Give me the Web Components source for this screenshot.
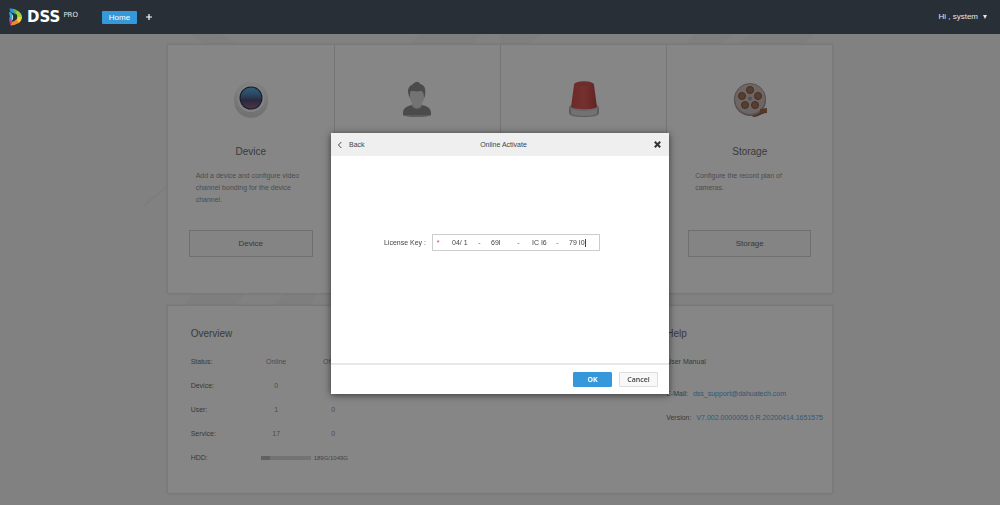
<!DOCTYPE html>
<html lang="en">
<head>
<meta charset="utf-8">
<meta name="viewport" content="width=device-width, initial-scale=1">
<title>DSS PRO</title>
<style>
  html { height: 100%; }
  body {
    margin: 0; min-height: 100%;
    font: 7px/12px "Liberation Sans", Arial, sans-serif;
    color: #666; background: #f4f4f4;
  }
</style>
</head>
<body>
<dss-app></dss-app>

<template id="topbar">
  <style>
    :host { display: flex; align-items: center; height: 34px; padding: 0 13px 0 8px; box-sizing: border-box;
      position: relative; z-index: 3; background: #282f36; color: #e3e6e8; font-size: 8px; }
    .brand { display: flex; align-items: center; color: #fff; text-decoration: none; width: 94px; }
    .brand svg { width: 15px; height: 18px; margin-right: 4px; }
    b { font: bold 15px/18px "DejaVu Sans", Verdana, sans-serif; }
    small { font: 7px/10px "DejaVu Sans", Verdana, sans-serif; margin: 0 0 4px 3px; color: #e3e6e8; }
    nav { display: flex; align-items: center; flex: 1; gap: 8px; }
    .tab { background: #3498db; color: #fff; text-decoration: none; border-radius: 1px; width: 35px; line-height: 13px; text-align: center; }
    button { font: inherit; color: inherit; background: none; border: 0; padding: 0; display: flex; align-items: center; gap: 5px; }
    .add svg { width: 8px; height: 8px; }
    .user svg { width: 4px; height: 4px; }
  </style>
  <a class="brand" href="#">
    <svg viewBox="0 0 30 36" aria-hidden="true">
      <path d="M3 1C9 1 14 2 18 5L15 13C12 10 8 9 5 9Z" fill="#2f8fe0"/>
      <path d="M9 2C20 3 28 10 28 19L19 20C19 14 17 10 12 8Z" fill="#63bb3a"/>
      <path d="M18 6c6 3 10 7 10 13l-9 1c0-5-1-8-4-10z" fill="#9bd03e"/>
      <path d="M28 18c0 5-3 10-8 13l-6-6c3-1 5-4 5-7z" fill="#f4cf37"/>
      <path d="M22 29C17 33 11 35 5 35l3-8c4 0 6-1 9-4z" fill="#f08a2c"/>
      <path d="M2 18l4 2 2 8-3 7c-2-5-3-11-3-17z" fill="#b8389b"/>
      <path d="M2 8c4 1 8 4 8 10 0 4-1 7-4 9-1-7-3-12-4-19z" fill="#2fb3d2"/>
      <path d="M8 13c3 3 3 8 0 12 1-4 1-8 0-12z" fill="#e9f4f6"/>
    </svg>
    <b>DSS</b><small>PRO</small>
  </a>
  <nav>
    <a class="tab" href="#">Home</a>
    <button class="add" type="button" aria-label="Add tab"><svg viewBox="0 0 8 8"><path d="M4 1v6M1 4h6" stroke="#fff" stroke-width="1.2"/></svg></button>
  </nav>
  <button class="user" type="button">Hi , system <svg viewBox="0 0 4 4"><path d="M0 0h4L2 4z" fill="#e3e6e8"/></svg></button>
</template>

<template id="card">
  <style>
    :host { display: flex; flex-direction: column; padding: 36px 21px; background: #fff; }
    :host(:not(:first-child)) { border-left: 1px solid #dcdcdc; }
    .icon { height: 36px; display: flex; justify-content: center; }
    ::slotted(svg) { width: 40px; height: 40px; flex: none; }
    h2 { margin: 25px 0 8px; height: 20px; font: 10px/20px "Liberation Sans", Arial, sans-serif; text-align: center; color: #666; }
    p { margin: 0 7px 24px; min-height: 36px; color: #8c8c8c; }
    button { height: 27px; font: 8px "Liberation Sans", Arial, sans-serif; color: #666; background: #fafafa; border: 1px solid #d0d0d0; }
  </style>
  <div class="icon"><slot></slot></div>
</template>

<template id="overview">
  <style>
    :host { display: block; padding: 21px 23px 23px; }
    h2 { margin: 0 0 9px; font: 10px/14px "Liberation Sans", Arial, sans-serif; }
    table { border-collapse: collapse; table-layout: fixed; width: 171px; color: #8c8c8c; }
    th, td { padding: 0; height: 24px; width: 57px; font-weight: normal; text-align: center; }
    th:first-child { text-align: left; color: #666; }
    .disk { display: flex; align-items: center; gap: 3px; padding-left: 13px; font-size: 6px; color: #777; }
    .bar { width: 50px; height: 4px; background: #d8d8d8; }
    .bar i { display: block; width: 18%; height: 4px; background: #b4b4b4; }
  </style>
  <h2>Overview</h2>
  <table>
    <tr><th scope="row">Status:</th><td>Online</td><td>Offline</td></tr>
    <tr><th scope="row">Device:</th><td>0</td><td></td></tr>
    <tr><th scope="row">User:</th><td>1</td><td>0</td></tr>
    <tr><th scope="row">Service:</th><td>17</td><td>0</td></tr>
    <tr><th scope="row">HDD:</th><td colspan="2"><div class="disk"><div class="bar"><i></i></div>189G/1049G</div></td></tr>
  </table>
</template>

<template id="help">
  <style>
    :host { display: block; padding: 21px 0; line-height: 24px; white-space: nowrap; }
    h2 { margin: 0 0 9px; font: 10px/14px "Liberation Sans", Arial, sans-serif; }
    p { margin: 0; display: flex; gap: 5px; }
    .manual { margin-bottom: 8px; }
    .manual a { color: inherit; }
    a { color: #5aa2dc; text-decoration: none; }
  </style>
  <h2>Help</h2>
  <p class="manual"><a href="#">User Manual</a></p>
  <p>E-Mail: <a href="mailto:dss_support@dahuatech.com">dss_support@dahuatech.com</a></p>
  <p>Version: <a href="#">V7.002.0000005.0.R.20200414.1651575</a></p>
</template>

<template id="license">
  <style>
    :host { display: grid; grid-template-columns: 10px 1fr 5px 1fr 5px 1fr 5px 1fr 5px; align-items: center;
      height: 17px; box-sizing: border-box; border: 1px solid #ccc; background: #fff; color: #555; }
    .req { color: #e33; text-align: center; }
    input { width: 100%; min-width: 0; box-sizing: border-box; border: 0; padding: 0 0 0 9px; margin: 0; background: none; outline: 0;
      font: 7px/12px "Liberation Sans", Arial, sans-serif; color: #444; height: 12px; }
    .last { display: flex; align-items: center; position: relative; }
    .last::after { content: ""; position: absolute; left: 25px; width: 1px; height: 8px; background: #444; }
    .dash { text-align: center; }
  </style>
  <span class="req">*</span>
  <input id="key" aria-label="License Key part 1" value="04/ 1"><span class="dash">-</span>
  <input aria-label="License Key part 2" value="69l"><span class="dash">-</span>
  <input aria-label="License Key part 3" value=" IC I6"><span class="dash">-</span>
  <span class="last"><input aria-label="License Key part 4" value="79 I0"></span>
</template>

<template id="dialog">
  <style>
    :host { display: flex; justify-content: center; align-items: flex-start; position: fixed; inset: 34px 0 0; z-index: 2;
      padding-top: 99px; background: rgba(14,14,14,.5); box-sizing: border-box; overflow: auto; }
    section { width: 338px; max-width: 100%; background: #fff; box-shadow: 0 1px 7px rgba(0,0,0,.6); color: #444; }
    header { display: grid; grid-template-columns: 1fr auto 1fr; align-items: center; height: 23px; padding: 0 7px 0 6px; background: #efefef; }
    h1 { margin: 0; padding-left: 8px; font: 7px/12px "Liberation Sans", Arial, sans-serif; }
    header button { font: inherit; color: inherit; background: none; border: 0; padding: 0; display: flex; align-items: center; gap: 6px; justify-self: start; }
    header .close { justify-self: end; }
    header svg { width: 6px; height: 8px; }
    header .close svg { width: 9px; height: 9px; }
    .body { display: grid; grid-template-columns: 1fr 168px; column-gap: 6px; align-items: center; padding: 78px 69px 112px 24px; }
    label { text-align: right; }
    footer { display: flex; justify-content: flex-end; gap: 7px; padding: 7px 11px; border-top: 2px solid #e8e8e8; }
    footer button { width: 39px; height: 15px; padding: 0; font: 600 7px/12px "Open Sans", "Noto Sans", sans-serif; border-radius: 1px;
      border: 1px solid #ddd; background: #f8f8f8; color: #444; }
    footer .ok { background: #3498db; border-color: #3498db; color: #fff; font-weight: 700; }
  </style>
  <section role="dialog" aria-labelledby="title">
    <header>
      <button type="button"><svg viewBox="0 0 6 8"><path d="M4.4 1L1.4 4l3 3" fill="none" stroke="#444" stroke-width="1"/></svg><span>Back</span></button>
      <h1 id="title">Online Activate</h1>
      <button class="close" type="button" aria-label="Close"><svg viewBox="0 0 9 9"><path d="M1.8 1.8l5.400 5.400M7.200 1.800L1.800 7.200" stroke="#333" stroke-width="2"/></svg></button>
    </header>
    <div class="body"><label for="license-field">License Key :</label><dss-license id="license-field"></dss-license></div>
    <footer><button class="ok" type="button">OK</button><button type="button">Cancel</button></footer>
  </section>
</template>

<template id="app">
  <style>
    :host { display: block; }
    main { display: grid; grid-template-columns: minmax(0,1fr) minmax(0,4fr) minmax(0,1fr); padding: 10px 0 12px;
      min-height: calc(100vh - 34px); box-sizing: border-box; align-content: start; row-gap: 11px; position: relative; }
    .backdrop { position: absolute; inset: 0; width: 100%; height: 100%; }
    .cards, .info { grid-column: 2; display: grid; position: relative; background: #fff; border: 1px solid #e4e4e4; box-shadow: 0 0 2px rgba(0,0,0,.1); }
    .cards { grid-template-columns: repeat(4, minmax(0,1fr)); }
    .info { grid-template-columns: minmax(0,3fr) minmax(0,1fr); }
  </style>
  <dss-topbar></dss-topbar>
  <main>
    <svg class="backdrop" viewBox="0 0 1000 471" preserveAspectRatio="none" aria-hidden="true">
      <g fill="#eeeeee"><path d="M190 0h32l14 10h-32zM420 0h62l-9 10h-62zM500 0h42l-14 10h-28zM695 0h36l-9 10h-36zM750 0h64l-10 10h-64z"/>
      <path d="M192 260h52l-8 11h-52zM284 260h32l-5 11h-38z"/></g>
      <path d="M144 171l22-18" stroke="#ececec" stroke-width="2"/>
    </svg>
    <div class="cards">
      <dss-card heading="Device" text="Add a device and configure video channel bonding for the device channel.">
        <svg viewBox="0 0 40 40">
          <defs><linearGradient id="lens" x2="0" y2="1"><stop stop-color="#5aa9e0"/><stop offset=".35" stop-color="#4681b4"/><stop offset=".6" stop-color="#46436f"/><stop offset="1" stop-color="#8b5a80"/></linearGradient>
          <linearGradient id="rim" x2="0" y2="1"><stop stop-color="#f6f6f6"/><stop offset="1" stop-color="#d5d5d5"/></linearGradient></defs>
          <circle cx="20" cy="20" r="17" fill="#bdbdbd" opacity=".6"/>
          <circle cx="20" cy="18" r="17" fill="url(#rim)"/><circle cx="20" cy="17.5" r="13.5" fill="#f8f8f8"/>
          <circle cx="20" cy="17" r="11.5" fill="#20243d"/><circle cx="20" cy="17" r="10.5" fill="url(#lens)"/>
        </svg>
      </dss-card>
      <dss-card>
        <svg viewBox="0 0 40 40">
          <ellipse cx="20" cy="34" rx="14" ry="2" fill="#aaa"/>
          <path d="M15 20h10v8c0 4-10 4-10 0z" fill="#cfcfcf"/>
          <path d="M6 34v-2c0-5 4-7 9-8 1 5 9 5 10 0 5 1 9 3 9 8v2z" fill="#888"/>
          <path d="M12 10c0 8 3 16 8 16s8-8 8-16l-7-3z" fill="#d9d9d9"/>
          <path d="M12 15C9 7 13 5 16 3c3-3 6-3 7 0 5 1 6 5 5 12l-1 2c0-6-2-7-3-7-4 1-8 0-10 0-1 1-1 3-1 7z" fill="#898989"/>
        </svg>
      </dss-card>
      <dss-card>
        <svg viewBox="0 0 40 40">
          <defs><linearGradient id="lamp"><stop stop-color="#c94643"/><stop offset=".5" stop-color="#dc5450"/><stop offset="1" stop-color="#b83a3a"/></linearGradient></defs>
          <path d="M5 26v6c0 3 7 4 15 4s15-1 15-4v-6z" fill="#aaa"/>
          <path d="M7 26v6c0 2 6 3 13 3s13-1 13-3v-6z" fill="#d7d7d7"/>
          <ellipse cx="20" cy="26" rx="15" ry="4" fill="#c2c2c2"/>
          <path d="M10 4c0-5 20-5 20 0l3 22c-3 3-23 3-26 0z" fill="url(#lamp)"/>
          <ellipse cx="20" cy="3" rx="8" ry="2" fill="#c84c48"/>
        </svg>
      </dss-card>
      <dss-card heading="Storage" text="Configure the record plan of cameras.">
        <svg viewBox="0 0 40 40">
          <path d="M21 33l16-6v5c-5 0-9 4-14 4z" fill="#8f5b3b"/>
          <circle cx="20" cy="19" r="16" fill="#9a8e8a"/><circle cx="20" cy="18" r="15.5" fill="#cdbfba" stroke="#a39692"/>
          <g fill="#a56f4e" stroke="#74503f"><circle cx="20" cy="9" r="3.5"/><circle cx="28" cy="15" r="3.5"/><circle cx="25" cy="24" r="3.5"/><circle cx="15" cy="24" r="3.5"/><circle cx="12" cy="15" r="3.5"/></g>
          <circle cx="20" cy="17.5" r="2" fill="#8e949f"/>
          <path d="M30 28l7-1v4l-7 1z" fill="#9c6443"/>
        </svg>
      </dss-card>
    </div>
    <div class="info"><dss-overview></dss-overview><dss-help></dss-help></div>
  </main>
  <dss-dialog></dss-dialog>
</template>

<script>
  class DssElement extends HTMLElement {
    constructor() {
      super();
      const root = this.attachShadow({ mode: "open" });
      root.append(document.getElementById(this.constructor.template).content.cloneNode(true));
    }
  }
  class DssTopbar extends DssElement { static template = "topbar"; }
  class DssOverview extends DssElement { static template = "overview"; }
  class DssHelp extends DssElement { static template = "help"; }
  class DssDialog extends DssElement {
    static template = "dialog";
    connectedCallback() {
      this.shadowRoot.querySelector("label").onclick = () =>
        this.shadowRoot.querySelector("dss-license").shadowRoot.getElementById("key").focus();
    }
  }
  class DssLicense extends DssElement { static template = "license"; }
  class DssApp extends DssElement { static template = "app"; }
  class DssCard extends DssElement {
    static template = "card";
    connectedCallback() {
      const heading = this.getAttribute("heading");
      if (!heading || this.shadowRoot.querySelector("h2")) return;
      for (const [tag, text] of [["h2", heading], ["p", this.getAttribute("text")], ["button", heading]]) {
        const el = document.createElement(tag);
        el.textContent = text;
        this.shadowRoot.append(el);
      }
    }
  }
  customElements.define("dss-topbar", DssTopbar);
  customElements.define("dss-card", DssCard);
  customElements.define("dss-overview", DssOverview);
  customElements.define("dss-help", DssHelp);
  customElements.define("dss-license", DssLicense);
  customElements.define("dss-dialog", DssDialog);
  customElements.define("dss-app", DssApp);
</script>
</body>
</html>
